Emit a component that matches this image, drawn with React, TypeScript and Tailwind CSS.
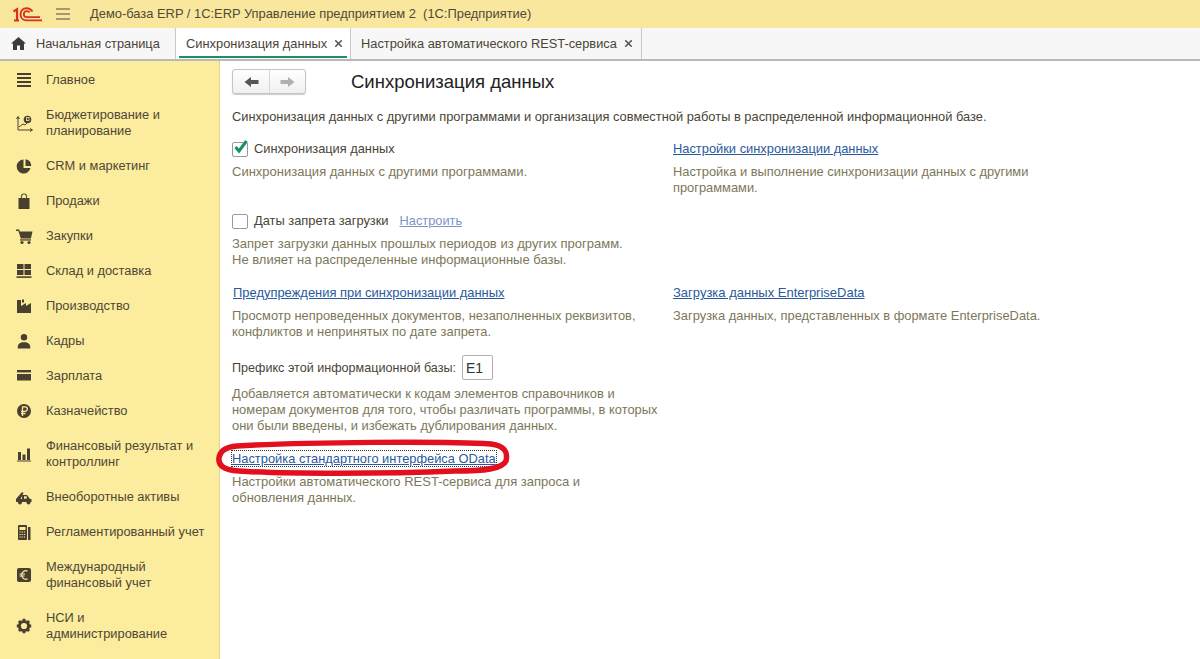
import React from "react";
import { X } from "lucide-react";

const ink = "#4a4030";
const bg = "#fbec9e";

const Icons: Record<string, React.ReactNode> = {
  main: (<g fill={ink}><rect x="2" y="2" width="14" height="2"/><rect x="2" y="6" width="14" height="2"/><rect x="2" y="10" width="14" height="2"/><rect x="2" y="14" width="14" height="2"/></g>),
  budget: (<g><path d="M3 3v13h14M1.5 5L3 2.5 4.5 5M15 14.5l2.5 1.5-2.5 1.5M4 13l4-3 2 1 3-3" fill="none" stroke={ink} strokeWidth="1"/><circle cx="12.5" cy="5.5" r="3.8" fill={ink}/><rect x="11.5" y="3.5" width="2.5" height="3" fill="none" stroke={bg} strokeWidth="0.8"/></g>),
  crm: (<g fill={ink}><path d="M8.5 2.5a7 7 0 1 0 7 8.5h-7z"/><path d="M10.5 2.2a7 7 0 0 1 5.8 6.8h-5.8z"/></g>),
  sales: (<g><path d="M3.5 6h11v11h-11z" fill={ink}/><path d="M6.5 8V4.5a2.5 2.5 0 0 1 5 0V8" fill="none" stroke={ink} strokeWidth="1.2"/><path d="M7.2 6.2V4.6a1.8 1.8 0 0 1 3.6 0v1.6" fill="none" stroke={bg} strokeWidth="0.6"/></g>),
  cart: (<g fill={ink}><path d="M1 2.5h3.2l.6 2h12.7l-1.6 7H5.8L3.4 4H1z"/><rect x="5" y="12.3" width="11" height="1.3"/><circle cx="7" cy="15.5" r="1.6"/><circle cx="14" cy="15.5" r="1.6"/></g>),
  stock: (<g fill={ink}><rect x="2" y="2" width="6.5" height="5"/><rect x="9.5" y="2" width="6.5" height="5"/><rect x="2" y="8" width="6.5" height="5"/><rect x="9.5" y="8" width="6.5" height="5"/><rect x="1.5" y="14.3" width="15" height="1.6"/></g>),
  prod: (<g fill={ink}><path d="M2 16V3h4v6l5-3v3l5-3v10z"/><rect x="7" y="2.5" width="2" height="3"/></g>),
  hr: (<g fill={ink}><circle cx="9" cy="5.2" r="3.2"/><path d="M2.8 16.5v-2.5c0-2 2.8-3.3 4.2-3.8h4c1.4.5 4.2 1.8 4.2 3.8v2.5z"/></g>),
  pay: (<g fill={ink}><path d="M2 3h14v2.4H2z"/><path d="M2 7h14v6.5H2z"/></g>),
  treasury: (<g><circle cx="9" cy="9" r="7" fill={ink}/><path d="M7.5 14V4.8h2.6a2.1 2.1 0 0 1 0 4.5H6M6 11.5h4.5" fill="none" stroke={bg} strokeWidth="1.3"/></g>),
  fin: (<g fill={ink}><rect x="3" y="7" width="3" height="8"/><rect x="7.5" y="9.5" width="3" height="5.5"/><rect x="12" y="3.5" width="3" height="11.5"/><rect x="2" y="15.5" width="14" height="1"/></g>),
  assets: (<g fill={ink}><path d="M1 11l6-7 1.5 1-3 6h1.5V7h5l3 4h1.5v3H1z"/><circle cx="5" cy="14.5" r="2"/><circle cx="13.5" cy="14.5" r="2"/><rect x="9" y="8.3" width="2.7" height="2.4" fill={bg}/></g>),
  reg: (<g><rect x="3" y="2" width="9" height="15" rx="1" fill={ink}/><rect x="4.5" y="4" width="6" height="3" fill={bg}/><rect x="13" y="4" width="2.5" height="13" fill={ink}/><path d="M4.5 9h6M4.5 11.5h6M4.5 14h6" stroke={bg} strokeWidth="1" strokeDasharray="1.2 1"/></g>),
  euro: (<g><rect x="2" y="2" width="14" height="14" rx="2" fill={ink}/><path d="M12.5 5.2a4 4 0 0 0-5.8 3.8 4 4 0 0 0 5.8 3.8M4.5 8h5.5M4.5 10h5" fill="none" stroke={bg} strokeWidth="1.2"/></g>),
  gear: (<g><circle cx="9" cy="9" r="4.6" fill="none" stroke={ink} strokeWidth="3"/><path d="M9 1.8v3M9 13.2v3M1.8 9h3M13.2 9h3M3.9 3.9L6 6M12 12l2.1 2.1M3.9 14.1L6 12M12 6l2.1-2.1" stroke={ink} strokeWidth="2.8"/></g>),
};

const menu: [string, string, string?][] = [
  ["main", "Главное"],
  ["budget", "Бюджетирование и", "планирование"],
  ["crm", "CRM и маркетинг"],
  ["sales", "Продажи"],
  ["cart", "Закупки"],
  ["stock", "Склад и доставка"],
  ["prod", "Производство"],
  ["hr", "Кадры"],
  ["pay", "Зарплата"],
  ["treasury", "Казначейство"],
  ["fin", "Финансовый результат и", "контроллинг"],
  ["assets", "Внеоборотные активы"],
  ["reg", "Регламентированный учет"],
  ["euro", "Международный", "финансовый учет"],
  ["gear", "НСИ и", "администрирование"],
];

function Logo() {
  return (
    <svg width="29" height="15" viewBox="0 0 29 15" fill="none" className="shrink-0">
      <path d="M0.5 4.5L4 2.2V13.5M1 13.5H6" stroke="#d9301f" strokeWidth="2.2" />
      <path d="M19.5 4.6C18.2 2.4 16 1.2 13.5 1.2 10 1.2 7.6 3.8 7.6 7.2s2.4 6.2 6 6.2H29" stroke="#d9301f" strokeWidth="1.9" />
      <path d="M16.8 5.4C16 4.6 15 4.1 14 4.1 12 4.1 10.8 5.5 10.8 7.2s1.2 3 3.2 3H27" stroke="#d9301f" strokeWidth="1.7" />
    </svg>
  );
}

function Arrow({ dir, color }: { dir: "l" | "r"; color: string }) {
  return (
    <svg width="15" height="12" viewBox="0 0 15 12">
      <path d={dir === "l" ? "M0.5 6L7 1v3h7.5v4H7v3z" : "M14.5 6L8 1v3H0.5v4H8v3z"} fill={color} />
    </svg>
  );
}

function Desc({ children, className = "" }: { children: React.ReactNode; className?: string }) {
  return <div className={`whitespace-nowrap text-[#7d7759] ${className}`}>{children}</div>;
}

function Link({ children }: { children: React.ReactNode }) {
  return <a className="text-[#2a5a9e] underline">{children}</a>;
}

export default function App() {
  return (
    <div className="relative flex h-[659px] w-[1200px] flex-col overflow-hidden bg-white text-[12.87px] leading-4 text-[#4a4436] [font-family:'Liberation_Sans',Arial,sans-serif]">
      {/* Title bar */}
      <div className="flex h-[28px] items-center bg-[#f9e79d] pl-[13px]">
        <Logo />
        <svg width="14" height="12" viewBox="0 0 14 12" className="ml-[14px]">
          <path d="M0 1h14M0 6h14M0 11h14" stroke="#4f4a38" strokeWidth="1" />
        </svg>
        <span className="ml-[20px] whitespace-nowrap text-[12.9px] text-[#4f4a38]">Демо-база ERP / 1С:ERP Управление предприятием 2&nbsp; (1С:Предприятие)</span>
      </div>

      {/* Tabs */}
      <div className="flex h-[33px] whitespace-nowrap border-b-2 border-[#b9b9b9] bg-[#f7f7f7]">
        <div className="flex w-[176px] items-center border-r border-[#c9c9c9] pl-[11px]">
          <svg width="15" height="13" viewBox="0 0 15 13"><path d="M7.5 0L15 6.5h-2V13H9V8.5H6V13H2V6.5H0z" fill="#3c3c3c" /></svg>
          <span className="ml-[10px] text-[12.8px]">Начальная страница</span>
        </div>
        <div className="relative flex w-[174px] items-center bg-white pl-[10px]">
          <span>Синхронизация данных</span>
          <X size={11} strokeWidth={3.5} className="ml-[6px] text-[#555]" />
          <div className="absolute bottom-[1px] left-[3px] right-[3px] h-[2px] bg-[#1f8f5f]" />
        </div>
        <div className="flex w-[292px] items-center border-x border-[#c9c9c9] pl-[10px]">
          <span className="text-[12.82px]">Настройка автоматического REST-сервиса</span>
          <X size={11} strokeWidth={3.5} className="ml-[6px] text-[#555]" />
        </div>
      </div>

      <div className="flex min-h-0 flex-1">
        {/* Sidebar */}
        <div className="w-[220px] shrink-0 border-r border-[#e3d68c] bg-[#fbec9e] pt-px text-[12.85px]">
          {menu.map(([icon, a, b]) => (
            <div key={a} className={`flex items-center pl-[15px] ${b ? "h-[51px]" : "h-[35px]"}`}>
              <svg width="18" height="18" viewBox="0 0 18 18" className="shrink-0">{Icons[icon]}</svg>
              <div className="ml-[13px] whitespace-nowrap text-[#4f4735]">{a}{b && <><br />{b}</>}</div>
            </div>
          ))}
        </div>

        {/* Main */}
        <div className="min-w-0 flex-1 pl-[12px] pt-[8px]">
          <div className="flex h-[25px] items-center">
            <div className="flex h-[25px] w-[74px] rounded-[3px] border border-[#c4c4c4] bg-gradient-to-b from-white to-[#f0f0f0] shadow-[0_1px_1px_rgba(0,0,0,0.2)]">
              <div className="flex w-[37px] items-center justify-center border-r border-[#d4d4d4]">
                <Arrow dir="l" color="#555555" />
              </div>
              <div className="flex flex-1 items-center justify-center">
                <Arrow dir="r" color="#b0b0b0" />
              </div>
            </div>
            <h1 className="ml-[45px] text-[18.5px] leading-[24px] text-[#222]">Синхронизация данных</h1>
          </div>

          <div className="mt-[15px] whitespace-nowrap text-[#4a4436]">Синхронизация данных с другими программами и организация совместной работы в распределенной информационной базе.</div>

          <div className="mt-[16px] grid grid-cols-[441px_1fr]">
            <div>
              <div className="flex h-[16px] items-center">
                <span className="relative h-[15px] w-[16px] rounded-[2px] border border-[#9a9a9a] bg-white">
                  <svg width="16" height="16" viewBox="0 0 16 16" className="absolute -top-[4px] left-0">
                    <path d="M2.5 8l3.5 4 7.5-10" fill="none" stroke="#14936a" strokeWidth="3" />
                  </svg>
                </span>
                <span className="ml-[6px] text-[12.8px]">Синхронизация данных</span>
              </div>
              <Desc className="mt-[7px] text-[13px]">Синхронизация данных с другими программами.</Desc>
            </div>
            <div>
              <div><Link>Настройки синхронизации данных</Link></div>
              <Desc className="mt-[7px]">Настройка и выполнение синхронизации данных с другими<br />программами.</Desc>
            </div>
          </div>

          <div className="mt-[17px]">
            <div className="flex h-[16px] items-center">
              <span className="h-[15px] w-[16px] rounded-[2px] border border-[#9a9a9a] bg-white" />
              <span className="ml-[6px]">Даты запрета загрузки</span>
              <a className="ml-[11px] text-[12.8px] text-[#7d94c8] underline">Настроить</a>
            </div>
            <Desc className="mt-[7px] text-[13px]">Запрет загрузки данных прошлых периодов из других программ.<br />Не влияет на распределенные информационные базы.</Desc>
          </div>

          <div className="mt-[17px] grid grid-cols-[441px_1fr]">
            <div>
              <div className="pl-px text-[12.95px]"><Link>Предупреждения при синхронизации данных</Link></div>
              <Desc className="mt-[7px] text-[12.9px]">Просмотр непроведенных документов, незаполненных реквизитов,<br />конфликтов и непринятых по дате запрета.</Desc>
            </div>
            <div>
              <div className="text-[13px]"><Link>Загрузка данных EnterpriseData</Link></div>
              <Desc className="mt-[7px] text-[12.9px]">Загрузка данных, представленных в формате EnterpriseData.</Desc>
            </div>
          </div>

          <div className="mt-[15px] flex h-[25px] items-center">
            <span className="w-[230px] whitespace-nowrap text-[12.6px]">Префикс этой информационной базы:</span>
            <span className="flex h-[25px] w-[31px] items-center rounded-[2px] border border-[#b0b0b0] pl-[3px] text-[14px] text-[#333]">Е1</span>
          </div>
          <Desc className="mt-[6px] text-[12.9px]">Добавляется автоматически к кодам элементов справочников и<br />номерам документов для того, чтобы различать программы, в которых<br />они были введены, и избежать дублирования данных.</Desc>

          <div className="mt-[17px]">
            <a className="text-[12.87px] text-[#2a5a9e] underline outline-1 outline-dotted outline-[#333]">Настройка стандартного интерфейса OData</a>
          </div>
          <Desc className="mt-[7px] text-[13px]">Настройки автоматического REST-сервиса для запроса и<br />обновления данных.</Desc>
        </div>
      </div>

      {/* Red hand-drawn annotation */}
      <svg className="pointer-events-none absolute left-[215px] top-[438px]" width="298" height="40" viewBox="0 0 298 40" fill="none">
        <path d="M22 8C90 4 230 3 276 6 290 8 293 14 291 23 287 31 270 33 240 33 170 36 70 36 24 33 8 32 3 27 4 20 5 13 10 9 22 8Z" stroke="#e2101e" strokeWidth="5.5" />
      </svg>
    </div>
  );
}
